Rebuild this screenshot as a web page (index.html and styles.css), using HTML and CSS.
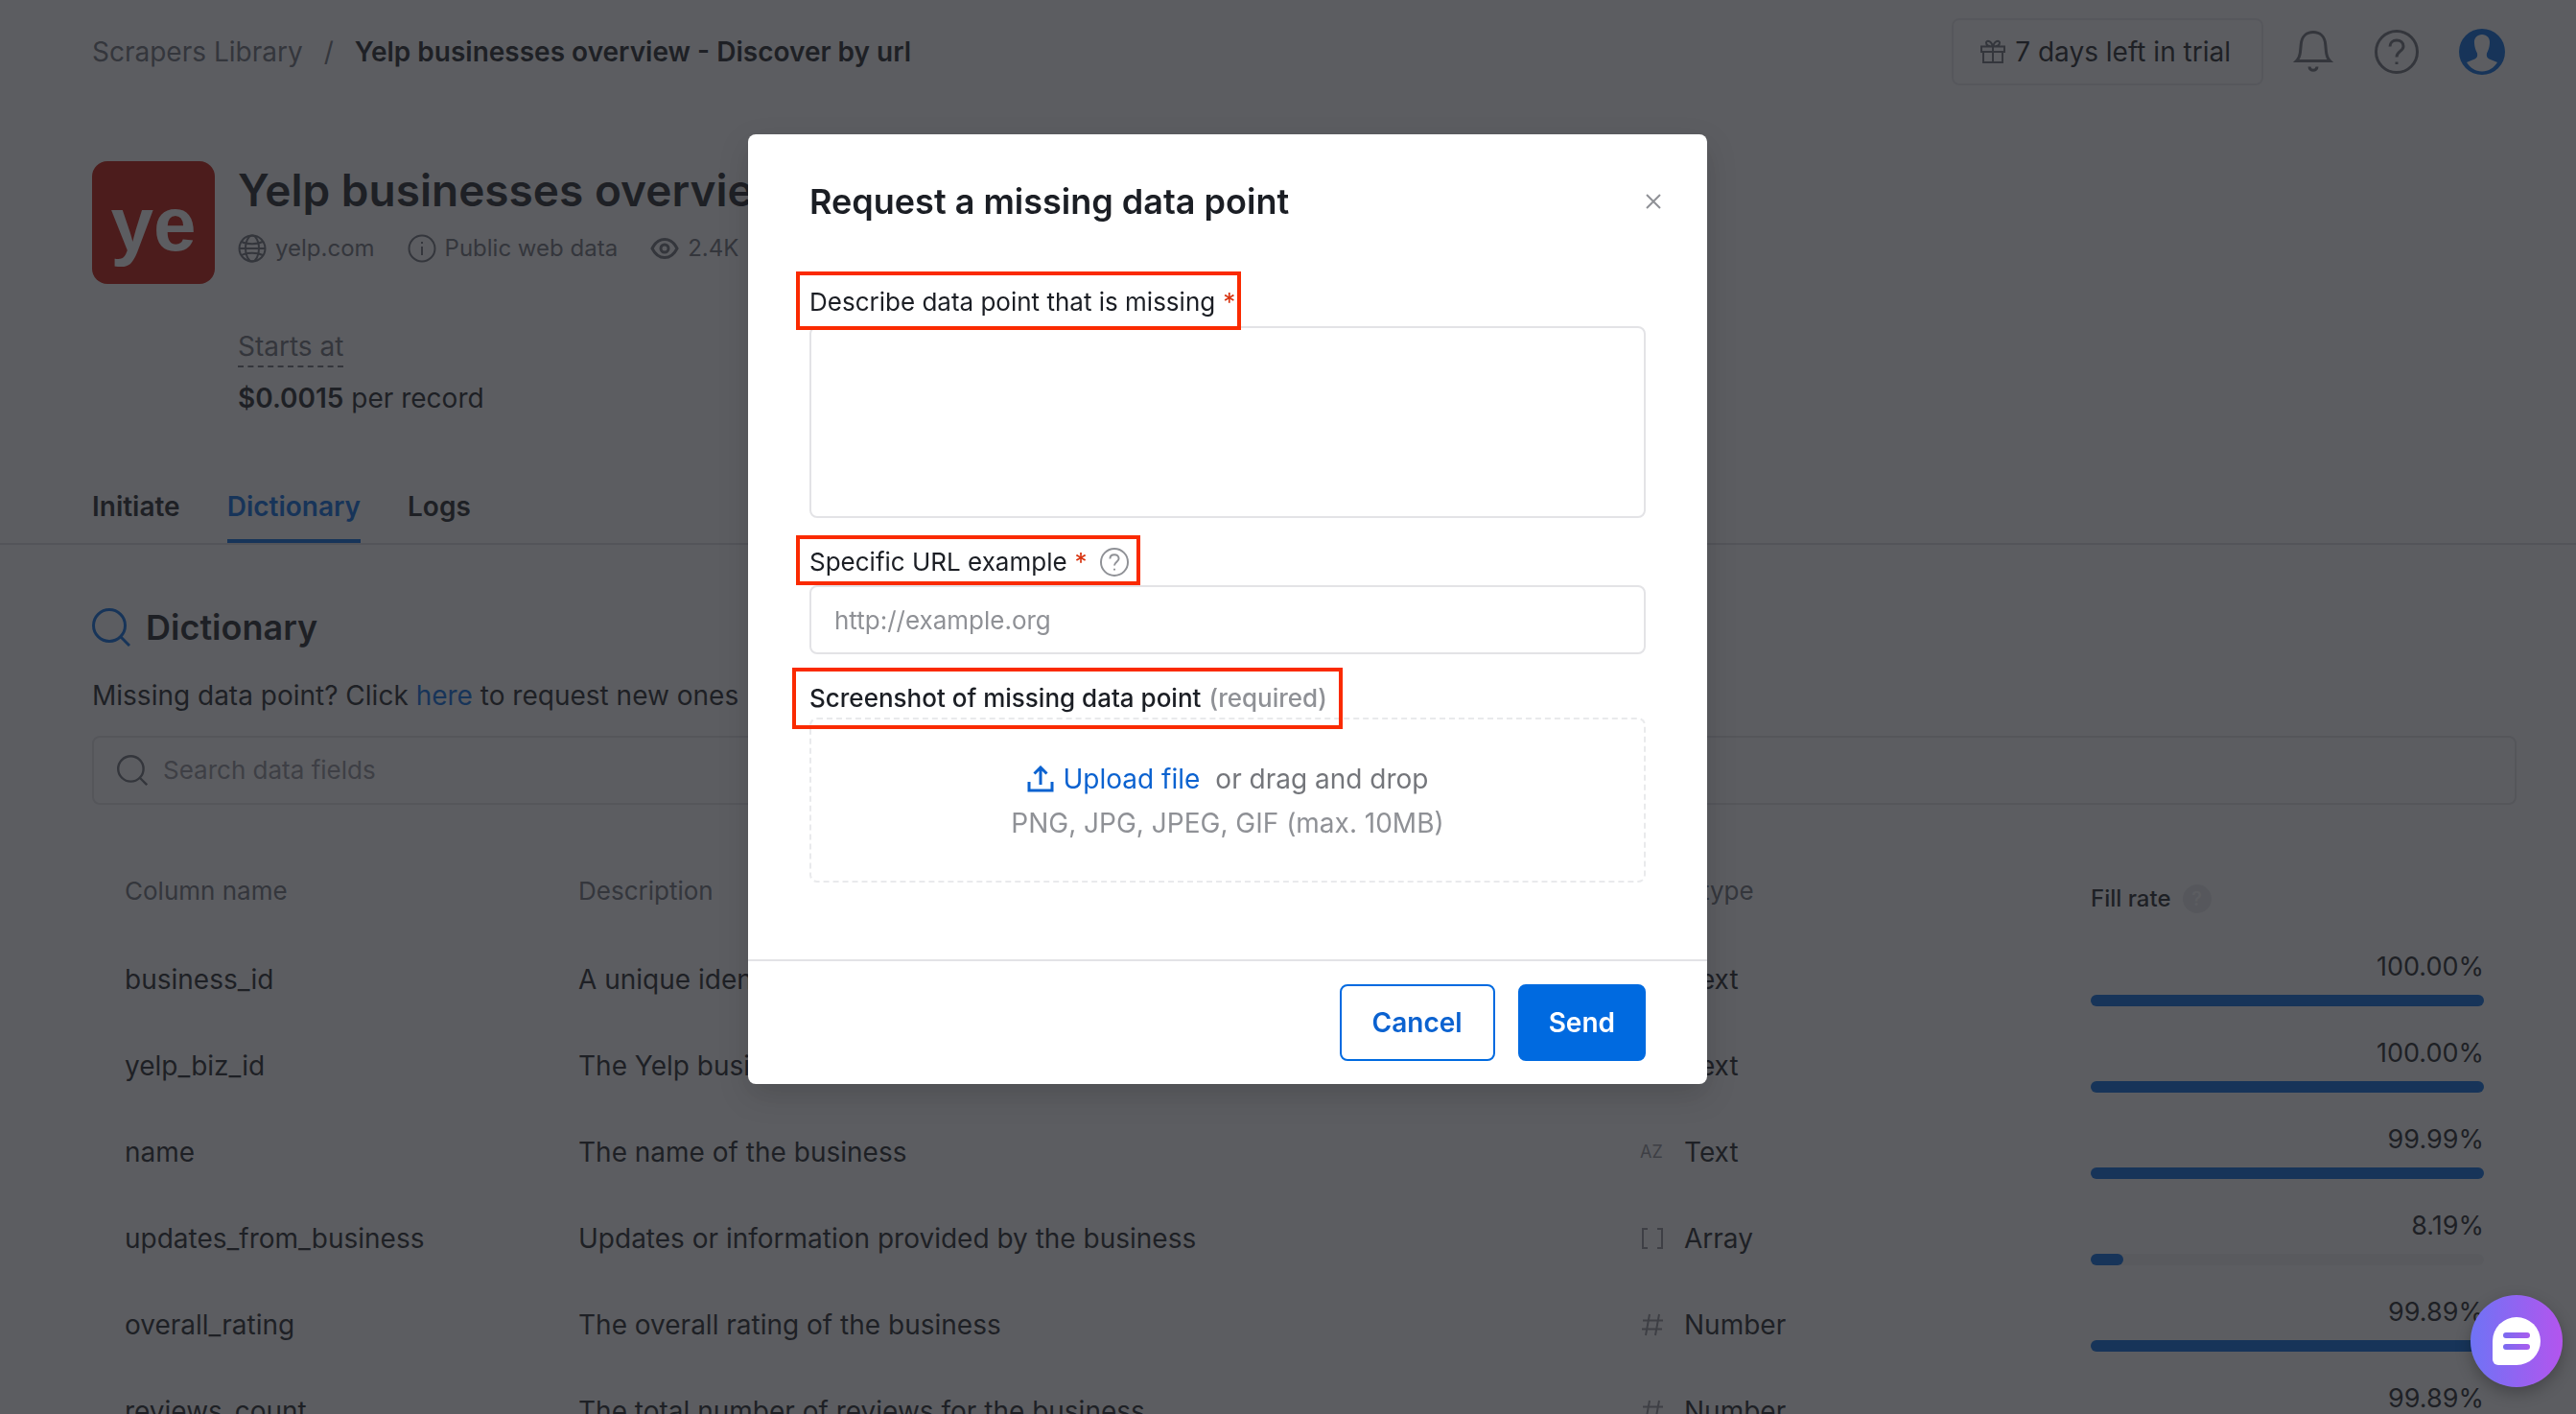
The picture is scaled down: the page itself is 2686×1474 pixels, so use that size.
FILE: index.html
```html
<!DOCTYPE html>
<html lang="en">
<head>
  <meta charset="UTF-8">
  <title>Yelp businesses overview - Discover by url</title>
  <meta name="viewport" content="width=device-width, initial-scale=1.0">
  <link rel="stylesheet" href="styles.css">
</head>
<body>

  <!-- Icons used more than once -->
  <svg class="sprite" aria-hidden="true">
    <symbol id="icon-search" viewBox="0 0 40 40">
      <circle cx="18" cy="18" r="16.5"/>
      <path d="M30 30l9 9"/>
    </symbol>
    <symbol id="icon-help" viewBox="0 0 46 46">
      <circle cx="23" cy="23" r="21.5"/>
      <path d="M16 17.5c0-4 3-6.500 7-6.500s7 2.500 7 6.200c0 5.300-7 5.300-7 11.300"/>
      <path d="M23 33.500v2.500"/>
    </symbol>
    <symbol id="icon-hash" viewBox="0 0 26 26">
      <path d="M10 2L6 24M20 2l-4 22M3 8.500h21M2 17.500h21"/>
    </symbol>
    <symbol id="icon-array" viewBox="0 0 26 26">
      <path d="M8 3H3v20h5M18 3h5v20h-5"/>
    </symbol>
  </svg>

  <!-- Top bar -->
  <header class="topbar">
    <nav class="breadcrumbs">
      <a href="#">Scrapers Library</a>
      <span class="separator">/</span>
      <span class="current">Yelp businesses overview - Discover by url</span>
    </nav>
    <div class="topbar-actions">
      <button class="trial-btn" type="button">
        <svg class="icon-gift" viewBox="0 0 26 26">
          <path d="M3 13v11h20V13M1 7.500h24V13H1zM13 7.500V24M13 7.500C9 7.500 6 6 6 3.500S11 .5 13 7.500M13 7.500c4 0 7-1.500 7-4S15 .5 13 7.500"/>
        </svg>
        7 days left in trial
      </button>
      <button class="icon-btn" type="button" aria-label="Notifications">
        <svg class="icon-bell" viewBox="0 0 38 44">
          <path d="M1.500 31.500C4 29 5 27 5.500 22l.8-8C7 6 12 1.500 19 1.500S31 6 31.700 14l.8 8c.5 5 1.500 7 4 9.500z"/>
          <path d="M15 37.500c0 5 8 5 8 0"/>
        </svg>
      </button>
      <button class="icon-btn" type="button" aria-label="Help">
        <svg class="icon-help-lg"><use href="#icon-help"/></svg>
      </button>
      <button class="icon-btn" type="button" aria-label="Account">
        <svg class="icon-avatar" viewBox="0 0 48 48">
          <circle class="avatar-bg" cx="24" cy="24" r="24"/>
          <path class="avatar-man" d="M24 6c-5 0-8.500 3.500-8 9 .2 4 1.500 8 3 10.500.6 3-.2 5-2.500 6L8 35c3.500 5.500 9 9.500 16 9.500S36.500 40.500 40 35l-8.500-3.500c-2.300-1-3.100-3-2.500-6 1.500-2.500 2.800-6.500 3-10.500.5-5.500-3-9-8-9z"/>
        </svg>
      </button>
    </div>
  </header>

  <!-- Scraper summary -->
  <section class="summary">
    <div class="scraper-logo">ye</div>
    <div class="summary-info">
      <h1>Yelp businesses overview</h1>
      <ul class="meta">
        <li>
          <svg viewBox="0 0 30 30">
            <circle cx="15" cy="15" r="13.500"/>
            <ellipse cx="15" cy="15" rx="7" ry="13.500"/>
            <path d="M1.500 15h27M4 8c6 3 16 3 22 0M4 22c6-3 16-3 22 0"/>
          </svg>
          yelp.com
        </li>
        <li>
          <svg viewBox="0 0 30 30">
            <circle cx="15" cy="15" r="13.500"/>
            <path d="M15 13v9M15 8v2"/>
          </svg>
          Public web data
        </li>
        <li>
          <svg viewBox="0 0 30 30">
            <path class="thick" d="M2 15c3-6 7.500-9.500 13-9.500S25 9 28 15c-3 6-7.500 9.500-13 9.500S5 21 2 15z"/>
            <circle class="thick" cx="15" cy="15" r="4"/>
          </svg>
          2.4K
        </li>
      </ul>
      <div class="starts-at">Starts at</div>
      <p class="price"><strong>$0.0015</strong> per record</p>
    </div>
  </section>

  <!-- Tabs -->
  <nav class="tabs">
    <a href="#">Initiate</a>
    <a href="#" class="active">Dictionary</a>
    <a href="#">Logs</a>
  </nav>

  <!-- Dictionary -->
  <main class="dictionary">
    <h2>
      <svg class="icon-title"><use href="#icon-search"/></svg>
      Dictionary
    </h2>
    <p class="hint">Missing data point? Click <a href="#">here</a> to request new ones</p>

    <div class="search-box">
      <svg class="icon-search"><use href="#icon-search"/></svg>
      <input type="text" placeholder="Search data fields" aria-label="Search data fields">
    </div>

    <table class="fields">
      <colgroup>
        <col class="col-name">
        <col>
        <col class="col-type">
        <col class="col-rate">
      </colgroup>
      <thead>
        <tr>
          <th>Column name</th>
          <th>Description</th>
          <th>Data type</th>
          <th class="rate-head"><span>Fill rate <i class="rate-help">?</i></span></th>
        </tr>
      </thead>
      <tbody>
        <tr>
          <td>business_id</td>
          <td>A unique identifier for the business</td>
          <td><span class="type"><b>AZ</b>Text</span></td>
          <td><div class="rate">100.00%</div><div class="bar"><div class="bar-fill" style="width: 100%"></div></div></td>
        </tr>
        <tr>
          <td>yelp_biz_id</td>
          <td>The Yelp business ID</td>
          <td><span class="type"><b>AZ</b>Text</span></td>
          <td><div class="rate">100.00%</div><div class="bar"><div class="bar-fill" style="width: 100%"></div></div></td>
        </tr>
        <tr>
          <td>name</td>
          <td>The name of the business</td>
          <td><span class="type"><b>AZ</b>Text</span></td>
          <td><div class="rate">99.99%</div><div class="bar"><div class="bar-fill" style="width: 99.99%"></div></div></td>
        </tr>
        <tr>
          <td>updates_from_business</td>
          <td>Updates or information provided by the business</td>
          <td><span class="type"><svg><use href="#icon-array"/></svg>Array</span></td>
          <td><div class="rate">8.19%</div><div class="bar"><div class="bar-fill" style="width: 8.19%"></div></div></td>
        </tr>
        <tr>
          <td>overall_rating</td>
          <td>The overall rating of the business</td>
          <td><span class="type"><svg><use href="#icon-hash"/></svg>Number</span></td>
          <td><div class="rate">99.89%</div><div class="bar"><div class="bar-fill" style="width: 99.89%"></div></div></td>
        </tr>
        <tr>
          <td>reviews_count</td>
          <td>The total number of reviews for the business</td>
          <td><span class="type"><svg><use href="#icon-hash"/></svg>Number</span></td>
          <td><div class="rate">99.89%</div><div class="bar"><div class="bar-fill" style="width: 99.89%"></div></div></td>
        </tr>
      </tbody>
    </table>
  </main>

  <!-- Request form -->
  <div class="backdrop">
    <form class="modal" role="dialog" aria-labelledby="modalTitle">
      <div class="modal-header">
        <h3 id="modalTitle">Request a missing data point</h3>
        <button class="close-btn" type="button" aria-label="Close">
          <svg viewBox="0 0 16 16"><path d="M1 1l14 14M15 1L1 15"/></svg>
        </button>
      </div>

      <div class="modal-body">
        <label class="field-label label-describe" for="describe">Describe data point that is missing <span class="star">*</span></label>
        <textarea id="describe"></textarea>

        <label class="field-label label-url" for="url">Specific URL example <span class="star">*</span>
          <svg class="icon-help-sm"><use href="#icon-help"/></svg>
        </label>
        <input type="text" id="url" placeholder="http://example.org">

        <label class="field-label label-file" for="file">Screenshot of missing data point <span class="required">(required)</span></label>
        <div class="dropzone">
          <p class="upload-row">
            <label class="upload-link" for="file">
              <svg viewBox="0 0 28 28"><path d="M2 17v9h24v-9M14 20V2M7.500 8.500L14 2l6.500 6.500"/></svg>
              Upload file
            </label>
            <span>or drag and drop</span>
          </p>
          <p class="upload-note">PNG, JPG, JPEG, GIF (max. 10MB)</p>
          <input type="file" id="file" hidden>
        </div>
      </div>

      <div class="modal-footer">
        <button class="btn btn-cancel" type="button">Cancel</button>
        <button class="btn btn-send" type="submit">Send</button>
      </div>
    </form>
  </div>

  <!-- Chat -->
  <button class="chat-btn" type="button" aria-label="Open chat">
    <svg viewBox="0 0 50 50">
      <defs>
        <linearGradient id="chatLines" x1="0" x2="1">
          <stop offset="0" stop-color="#7a6bf0"/>
          <stop offset="1" stop-color="#a95cee"/>
        </linearGradient>
      </defs>
      <path fill="#fff" d="M25 0a25 25 0 0 1 0 50H6a6 6 0 0 1-6-6V25A25 25 0 0 1 25 0z"/>
      <rect x="11" y="16" width="28" height="6" rx="3" fill="url(#chatLines)"/>
      <rect x="11" y="28" width="28" height="6" rx="3" fill="url(#chatLines)"/>
    </svg>
  </button>

</body>
</html>
```
FILE: styles.css
```css
/* Reset */
* {
  margin: 0;
  padding: 0;
  box-sizing: border-box;
}

body {
  font-family: Inter, "Liberation Sans", sans-serif;
  font-size: 28px;
  line-height: 40px;
  color: #1b1e24;
  background-color: #fff;
  height: 100vh;
  overflow: hidden;
}

a {
  color: #006ae0;
  text-decoration: none;
}

button,
input,
textarea {
  font: inherit;
  color: inherit;
  background: none;
  border: none;
}

button {
  cursor: pointer;
}

svg {
  display: block;
  flex-shrink: 0;
  fill: none;
  stroke: currentColor;
  stroke-width: 2;
}

.sprite {
  position: absolute;
  width: 0;
  height: 0;
}

/* Top bar */
.topbar {
  display: flex;
  justify-content: space-between;
  align-items: center;
  height: 108px;
  padding: 0 74px 0 96px;
}

.breadcrumbs {
  display: flex;
  gap: 22px;
}

.breadcrumbs a,
.breadcrumbs .separator {
  color: #6b6f76;
}

.breadcrumbs .current {
  font-weight: 600;
}

.topbar-actions {
  display: flex;
  align-items: center;
  gap: 42px;
  color: #6b6f76;
}

.trial-btn {
  display: flex;
  align-items: center;
  gap: 10px;
  height: 70px;
  padding: 0 32px 0 28px;
  margin-right: -12px;
  border: 2px solid #e9eaec;
  border-radius: 8px;
  color: #1b1e24;
}

.icon-gift {
  width: 26px;
  height: 26px;
  color: #6b6f76;
}

.icon-bell {
  width: 44px;
  height: 44px;
  stroke-width: 3;
}

.icon-help-lg {
  width: 46px;
  height: 46px;
  stroke-width: 3;
}

.icon-avatar {
  width: 48px;
  height: 48px;
  stroke: none;
}

.avatar-bg {
  fill: #006ae0;
}

.avatar-man {
  fill: #fff;
}

/* Scraper summary */
.summary {
  display: flex;
  gap: 24px;
  padding: 60px 62px 73px 96px;
}

.scraper-logo {
  width: 128px;
  height: 128px;
  border-radius: 16px;
  background-color: #c41200;
  color: #fff;
  font-family: "Liberation Sans", sans-serif;
  font-size: 80px;
  font-weight: bold;
  line-height: 132px;
  text-align: center;
}

h1 {
  font-size: 46px;
  font-weight: 600;
  line-height: 60px;
}

.meta {
  display: flex;
  gap: 34px;
  margin: 15px 0 66px;
  list-style: none;
  font-size: 24px;
  line-height: 32px;
  color: #6b6f76;
}

.meta li {
  display: flex;
  align-items: center;
  gap: 9px;
}

.meta svg {
  width: 30px;
  height: 30px;
}

.meta .thick {
  stroke-width: 3;
}

.starts-at {
  width: max-content;
  border-bottom: 2px dashed #6b6f76;
  color: #6b6f76;
}

.price {
  margin-top: 12px;
}

.price strong {
  font-weight: 600;
}

/* Tabs */
.tabs {
  display: flex;
  gap: 49px;
  padding-left: 96px;
  border-bottom: 2px solid #dcdde0;
}

.tabs a {
  padding-bottom: 14px;
  border-bottom: 4px solid transparent;
  color: #1b1e24;
  font-weight: 600;
}

.tabs .active {
  border-color: #006ae0;
  color: #006ae0;
}

/* Dictionary */
.dictionary {
  padding: 62px 62px 0 96px;
}

h2 {
  display: flex;
  align-items: center;
  gap: 16px;
  font-size: 36px;
  font-weight: 600;
  line-height: 48px;
}

.icon-title {
  width: 40px;
  height: 40px;
  color: #006ae0;
  stroke-width: 3;
}

.hint {
  margin: 27px 0 22px;
}

.search-box {
  display: flex;
  align-items: center;
  gap: 16px;
  height: 72px;
  padding: 0 24px;
  border: 2px solid #e3e3e6;
  border-radius: 8px;
}

.search-box input {
  flex: 1;
  font-size: 26px;
  outline: none;
}

.icon-search {
  width: 32px;
  height: 32px;
  color: #6b6f76;
  stroke-width: 3;
}

::placeholder {
  color: #8f9196;
  opacity: 1;
}

.fields {
  width: 100%;
  margin-top: 42px;
  border-collapse: collapse;
  table-layout: fixed;
}

.col-name {
  width: 473px;
}

.col-type {
  width: 470px;
}

.col-rate {
  width: 478px;
}

.fields th {
  height: 95px;
  padding: 0 34px;
  color: #6b6f76;
  font-size: 26px;
  font-weight: 400;
  text-align: left;
}

.fields td {
  height: 90px;
  padding: 0 34px;
}

.fields .rate-head {
  padding-top: 16px;
  color: #1b1e24;
  font-size: 24px;
  font-weight: 500;
}

.rate-head span {
  display: flex;
  align-items: center;
  gap: 12px;
}

.rate-help {
  width: 30px;
  height: 30px;
  border-radius: 50%;
  background-color: #e9eaec;
  color: #fff;
  font-size: 20px;
  font-style: normal;
  line-height: 30px;
  text-align: center;
}

.type {
  display: flex;
  align-items: center;
  gap: 20px;
}

.type b {
  width: 26px;
  color: #8f9196;
  font-size: 18px;
  font-weight: 400;
}

.type svg {
  width: 26px;
  height: 26px;
  color: #8f9196;
}

.rate {
  font-size: 27px;
  text-align: right;
}

.bar {
  height: 12px;
  margin: 9px 0 6px;
  border-radius: 6px;
  background-color: #f2f3f5;
}

.bar-fill {
  height: 12px;
  border-radius: 6px;
  background-color: #006ae0;
}

.backdrop {
  position: fixed;
  inset: 0;
  display: flex;
  justify-content: center;
  align-items: flex-start;
  padding: 140px 126px 0 0;
  background-color: rgba(31, 33, 38, 0.73);
}

.modal {
  width: 1000px;
  border-radius: 8px;
  background-color: #fff;
  box-shadow: 0 12px 32px rgba(0, 0, 0, 0.15);
}

.modal-header {
  display: flex;
  justify-content: space-between;
  align-items: center;
  padding: 45px 48px 0 64px;
}

.modal-header h3 {
  font-size: 36px;
  font-weight: 600;
  line-height: 50px;
}

.close-btn {
  padding: 0;
}

.close-btn svg {
  width: 16px;
  height: 16px;
  color: #8f9196;
}

.modal-body {
  padding: 48px 64px 80px;
}

/* Highlighted labels */
.field-label {
  position: relative;
  z-index: 1;
  display: flex;
  align-items: center;
  gap: 8px;
  width: max-content;
  margin-left: -14px;
  padding: 3px 10px 0;
  border: 4px solid #fa2a00;
  font-size: 26px;
}

.label-describe {
  height: 61px;
  padding-right: 2px;
  margin-bottom: -4px;
}

.label-url {
  height: 52px;
  padding-right: 8px;
  margin-top: 18px;
}

.label-file {
  height: 64px;
  padding: 0 12px 0 14px;
  margin: 14px 0 -12px -18px;
  font-weight: 500;
}

.star {
  color: #d8330f;
}

.required {
  color: #8f9196;
}

.icon-help-sm {
  width: 30px;
  height: 30px;
  margin-left: 5px;
  color: #8f9196;
  stroke-width: 3;
}

.modal-body textarea,
.modal-body input {
  width: 100%;
  border: 2px solid #e3e3e6;
  border-radius: 8px;
  font-size: 26px;
}

.modal-body textarea {
  display: block;
  height: 200px;
  padding: 16px 24px;
  resize: none;
}

.modal-body input {
  height: 72px;
  padding: 0 24px;
}

.dropzone {
  height: 172px;
  padding-top: 42px;
  border: 2px dashed #e9eaec;
  border-radius: 8px;
  text-align: center;
}

.upload-row {
  display: flex;
  justify-content: center;
  gap: 16px;
  color: #74767b;
}

.upload-link {
  display: flex;
  align-items: center;
  gap: 10px;
  color: #0b62d0;
  cursor: pointer;
}

.upload-link svg {
  width: 28px;
  height: 28px;
  stroke-width: 3;
}

.upload-note {
  margin-top: 6px;
  color: #8f9196;
}

.modal-footer {
  display: flex;
  justify-content: flex-end;
  gap: 24px;
  padding: 24px 64px;
  border-top: 2px solid #e3e3e6;
}

.btn {
  height: 80px;
  padding: 0 32px;
  border: 2px solid #006ae0;
  border-radius: 8px;
  font-weight: 600;
}

.btn-cancel {
  color: #0b62d0;
}

.btn-send {
  padding: 0 30px;
  background-color: #006ae0;
  color: #fff;
}

/* Chat */
.chat-btn {
  position: fixed;
  right: 14px;
  bottom: 28px;
  display: flex;
  justify-content: center;
  align-items: center;
  width: 96px;
  height: 96px;
  border-radius: 50%;
  background: linear-gradient(90deg, #6f73f5, #b355ee);
  box-shadow: 0 6px 16px rgba(0, 0, 0, 0.25);
}

.chat-btn svg {
  width: 50px;
  height: 50px;
  stroke: none;
}
```
